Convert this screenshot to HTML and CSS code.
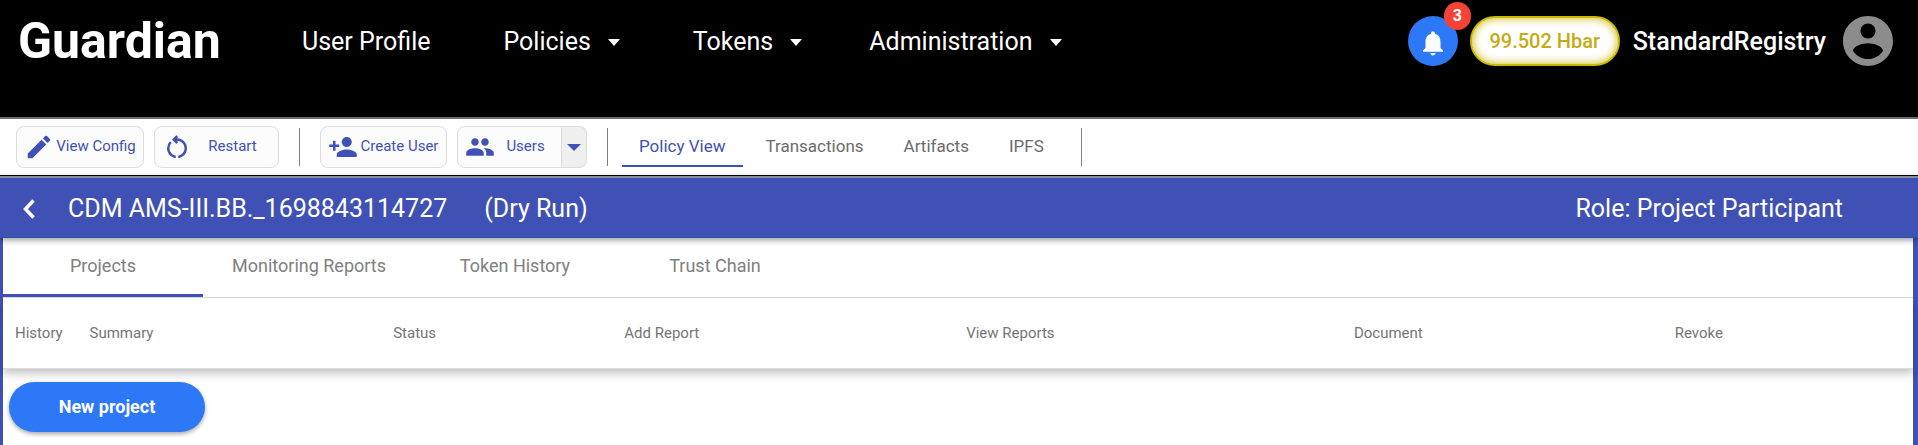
FILE: index.html
```html
<!DOCTYPE html>
<html lang="en">
<head>
<meta charset="utf-8">
<title>Guardian</title>
<link rel="stylesheet" href="styles.css">
</head>
<body>
<header class="header">
  <a class="logo" href="#">Guardian</a>
  <nav class="nav">
    <a class="nav-link" href="#">User Profile</a>
    <button class="nav-link nav-wide" type="button">Policies<span class="caret"></span></button>
    <button class="nav-link nav-wide" type="button">Tokens<span class="caret"></span></button>
    <button class="nav-link" type="button">Administration<span class="caret"></span></button>
  </nav>
  <div class="account">
    <button class="bell" type="button" aria-label="Notifications">
      <svg viewBox="0 0 24 24" width="30" height="30"><path d="M12 22c1.1 0 2-.9 2-2h-4c0 1.1.89 2 2 2zm6-6v-5c0-3.07-1.64-5.64-4.5-6.32V4c0-.83-.67-1.5-1.500-1.500s-1.500.67-1.500 1.500v.68C7.630 5.360 6 7.920 6 11v5l-2 2v1h16v-1l-2-2z"/></svg>
      <span class="badge">3</span>
    </button>
    <div class="balance">99.502 Hbar</div>
    <span class="username">StandardRegistry</span>
    <button class="avatar" type="button" aria-label="Account">
      <svg viewBox="2 2 20 20" width="50" height="50"><path d="M12 2C6.480 2 2 6.480 2 12s4.480 10 10 10 10-4.480 10-10S17.520 2 12 2zm0 3c1.660 0 3 1.340 3 3s-1.340 3-3 3-3-1.340-3-3 1.340-3 3-3zm0 14.200c-2.500 0-4.710-1.280-6-3.220.030-1.990 4-3.080 6-3.080 1.990 0 5.970 1.090 6 3.080-1.290 1.940-3.500 3.220-6 3.220z"/></svg>
    </button>
  </div>
</header>

<div class="toolbar">
  <button class="tool tool-config" type="button">
    <svg viewBox="0 0 24 24" width="30" height="30"><path d="M3 17.250V21h3.750L17.810 9.940l-3.750-3.750L3 17.250zM20.710 7.040a1 1 0 0 0 0-1.410l-2.340-2.340a1 1 0 0 0-1.410 0l-1.830 1.830 3.750 3.750 1.830-1.830z"/></svg>
    <span class="tool-label">View Config</span>
  </button>
  <button class="tool tool-restart" type="button">
    <svg viewBox="0 0 24 24" width="30" height="30"><path d="M6 13c0-1.650.67-3.150 1.760-4.240L6.340 7.340A8.014 8.014 0 0 0 4 13c0 4.080 3.050 7.440 7 7.930v-2.020c-2.830-.48-5-2.940-5-5.910zm14 0c0-4.420-3.580-8-8-8-.06 0-.12.010-.18.010l1.090-1.090L11.500 2.500 8 6l3.500 3.500 1.410-1.410-1.080-1.080c.06 0 .12-.010.17-.010 3.310 0 6 2.690 6 6 0 2.970-2.170 5.430-5 5.910v2.020c3.950-.49 7-3.850 7-7.930z"/></svg>
    <span class="tool-label">Restart</span>
  </button>
  <span class="divider"></span>
  <button class="tool tool-create" type="button">
    <svg viewBox="0 0 24 24" width="30" height="30"><path d="M15 12c2.210 0 4-1.790 4-4s-1.790-4-4-4-4 1.790-4 4 1.790 4 4 4zm-9-2V7H4v3H1v2h3v3h2v-3h3v-2H6zm9 4c-2.670 0-8 1.340-8 4v2h16v-2c0-2.660-5.330-4-8-4z"/></svg>
    <span class="tool-label">Create User</span>
  </button>
  <div class="split">
    <button class="tool tool-users" type="button">
      <svg viewBox="0 0 24 24" width="30" height="30"><path d="M16 11c1.660 0 2.990-1.340 2.990-3S17.660 5 16 5c-1.660 0-3 1.340-3 3s1.340 3 3 3zm-8 0c1.660 0 2.990-1.340 2.990-3S9.660 5 8 5C6.340 5 5 6.340 5 8s1.340 3 3 3zm0 2c-2.330 0-7 1.170-7 3.500V19h14v-2.500c0-2.330-4.670-3.500-7-3.500zm8 0c-.29 0-.62.020-.97.050 1.160.84 1.970 1.970 1.970 3.450V19h6v-2.500c0-2.330-4.670-3.500-7-3.500z"/></svg>
      <span class="tool-label">Users</span>
    </button>
    <button class="split-toggle" type="button" aria-label="Choose user"><span class="caret caret-large"></span></button>
  </div>
  <span class="divider"></span>
  <nav class="views">
    <a class="view view-active" href="#">Policy View</a>
    <a class="view" href="#">Transactions</a>
    <a class="view" href="#">Artifacts</a>
    <a class="view" href="#">IPFS</a>
  </nav>
  <span class="divider"></span>
</div>

<div class="policy-bar">
  <button class="back" type="button" aria-label="Back">
    <svg viewBox="0 0 12 20" width="12" height="20"><path d="M10.500 1.500 2.500 10l8 8.500" fill="none" stroke="#fff" stroke-width="3.500"/></svg>
  </button>
  <h1 class="policy-name">CDM AMS-III.BB._1698843114727</h1>
  <span class="policy-mode">(Dry Run)</span>
  <span class="policy-role">Role: Project Participant</span>
</div>

<main class="content">
  <nav class="tabs">
    <a class="tab tab-active" href="#">Projects</a>
    <a class="tab" href="#">Monitoring Reports</a>
    <a class="tab" href="#">Token History</a>
    <a class="tab" href="#">Trust Chain</a>
  </nav>
  <table class="grid">
    <colgroup>
      <col class="col-history"><col class="col-summary"><col class="col-status"><col class="col-add"><col class="col-view"><col class="col-document"><col class="col-revoke">
    </colgroup>
    <thead>
      <tr><th>History</th><th>Summary</th><th>Status</th><th>Add Report</th><th>View Reports</th><th>Document</th><th>Revoke</th></tr>
    </thead>
  </table>
  <button class="new-project" type="button">New project</button>
</main>
</body>
</html>
```

FILE: styles.css
```css
* {
  box-sizing: border-box;
}

html,
body {
  height: 100%;
}

body {
  margin: 0;
  display: flex;
  flex-direction: column;
  background: #fff;
  font-family: Roboto, "Liberation Sans", sans-serif;
}

button {
  margin: 0;
  padding: 0;
  border: 0;
  background: none;
  font: inherit;
  color: inherit;
  cursor: pointer;
}

a {
  color: inherit;
  text-decoration: none;
}

svg {
  display: block;
  flex: none;
  fill: currentColor;
}

.header {
  display: flex;
  align-items: flex-start;
  flex: none;
  padding: 16px 25px 49px 18px;
  border-bottom: 2px solid #6b6b6b;
  background: #000;
  color: #fff;
}

.logo {
  width: 284px;
  font-size: 50px;
  font-weight: 700;
  line-height: 50px;
}

.nav {
  display: flex;
  gap: 67px;
  font-size: 25px;
  line-height: 52px;
}

.nav-link {
  display: flex;
  align-items: center;
  gap: 17px;
  white-space: nowrap;
}

.nav-wide {
  margin-left: 6px;
}

.caret {
  border: solid transparent;
  border-width: 7px 6px 0;
  border-top-color: currentColor;
}

.caret-large {
  border-width: 7px 7px 0;
}

.account {
  display: flex;
  align-items: center;
  margin-left: auto;
  height: 50px;
}

.bell {
  position: relative;
  display: grid;
  place-items: center;
  width: 50px;
  height: 50px;
  padding-top: 4px;
  border-radius: 50%;
  background: #2c78f6;
}

.badge {
  position: absolute;
  top: -14px;
  right: -13px;
  width: 27px;
  height: 28px;
  border-radius: 14px;
  background: #f44336;
  font-size: 16px;
  font-weight: 700;
  line-height: 27px;
  text-align: center;
}

.balance {
  min-width: 150px;
  margin: 0 13px 0 12px;
  border: 2px solid #c9b900;
  border-radius: 25px;
  background: #fff;
  box-shadow: inset 0 0 10px #c9b900;
  color: #c6ab14;
  font-size: 20px;
  font-weight: 500;
  line-height: 46px;
  text-align: center;
}

.username {
  margin-right: 17px;
  font-size: 25px;
  font-weight: 500;
}

.avatar {
  color: #8c8c8c;
}

.toolbar {
  display: flex;
  align-items: center;
  flex: none;
  height: 57px;
  padding: 0 16px;
  border-bottom: 1px solid #000;
  color: #3f51b5;
}

.tool {
  display: flex;
  align-items: center;
  height: 42px;
  padding: 0 6px 0 7px;
  border: 1px solid #dcdcdc;
  border-radius: 8px;
  background: #fcfcfc;
  font-size: 15px;
}

.tool-label {
  flex: 1;
  padding: 0 0 2px 1px;
  text-align: center;
  white-space: nowrap;
}

.tool-config {
  width: 128px;
}

.tool-create {
  width: 127px;
}

.tool-restart {
  width: 125px;
  margin-left: 10px;
}

.split {
  display: flex;
  width: 130px;
  margin-left: 10px;
}

.tool-users {
  flex: 1;
  border-radius: 8px 0 0 8px;
}

.split-toggle {
  display: grid;
  place-items: center;
  width: 25px;
  border: 1px solid #dcdcdc;
  border-left: 0;
  border-radius: 0 8px 8px 0;
  background: #efefef;
}

.divider {
  width: 1px;
  height: 38px;
  margin: 0 20px;
  background: #808080;
}

.views {
  display: flex;
  gap: 6px;
  margin-left: -6px;
  font-size: 17px;
  line-height: 38px;
  color: #6b6b6b;
}

.view {
  padding: 0 17px;
  border-bottom: 2px solid transparent;
}

.view-active {
  border-color: #3f51b5;
  color: #3f51b5;
}

.policy-bar {
  position: relative;
  z-index: 1;
  display: flex;
  align-items: center;
  flex: none;
  height: 62px;
  padding: 2px 75px 0 23px;
  border-top: 2px solid #8a8a9c;
  border-bottom: 1px solid #1a5f9e;
  background: #3f51b5;
  box-shadow: 0 2px 6px rgba(0, 0, 0, 0.4);
  color: #fff;
  font-size: 25px;
}

.policy-name {
  margin: 0 37px 0 33px;
  font-size: 25px;
  font-weight: 400;
}

.policy-role {
  margin-left: auto;
}

.content {
  flex: 1;
  border: solid #3f51b5;
  border-width: 0 5px 0 3px;
}

.tabs {
  display: flex;
  border-bottom: 1px solid #dcdcdc;
  color: #808080;
  font-size: 18px;
  line-height: 56px;
}

.tab {
  min-width: 200px;
  padding: 0 29px;
  border-bottom: 3px solid transparent;
  text-align: center;
}

.tab-active {
  border-color: #3f51b5;
}

.grid {
  width: 100%;
  border-collapse: collapse;
  table-layout: fixed;
  box-shadow: 0 5px 8px rgba(0, 0, 0, 0.22);
}

.grid th {
  height: 70px;
  padding: 0 0 0 12px;
  border-bottom: 1px solid #dcdcdc;
  color: #757575;
  font-size: 15px;
  font-weight: 400;
  text-align: left;
}

.col-history { width: 3.9%; }
.col-summary { width: 15.9%; }
.col-status { width: 12.1%; }
.col-add { width: 17.9%; }
.col-view { width: 20.3%; }
.col-document { width: 16.8%; }
.col-revoke { width: 13.1%; }

.new-project {
  margin: 13px 0 0 6px;
  min-width: 196px;
  border-radius: 25px;
  background: #2c78f6;
  box-shadow: 0 2px 4px rgba(0, 0, 0, 0.35);
  color: #fff;
  font-size: 18px;
  font-weight: 700;
  line-height: 50px;
}
```
